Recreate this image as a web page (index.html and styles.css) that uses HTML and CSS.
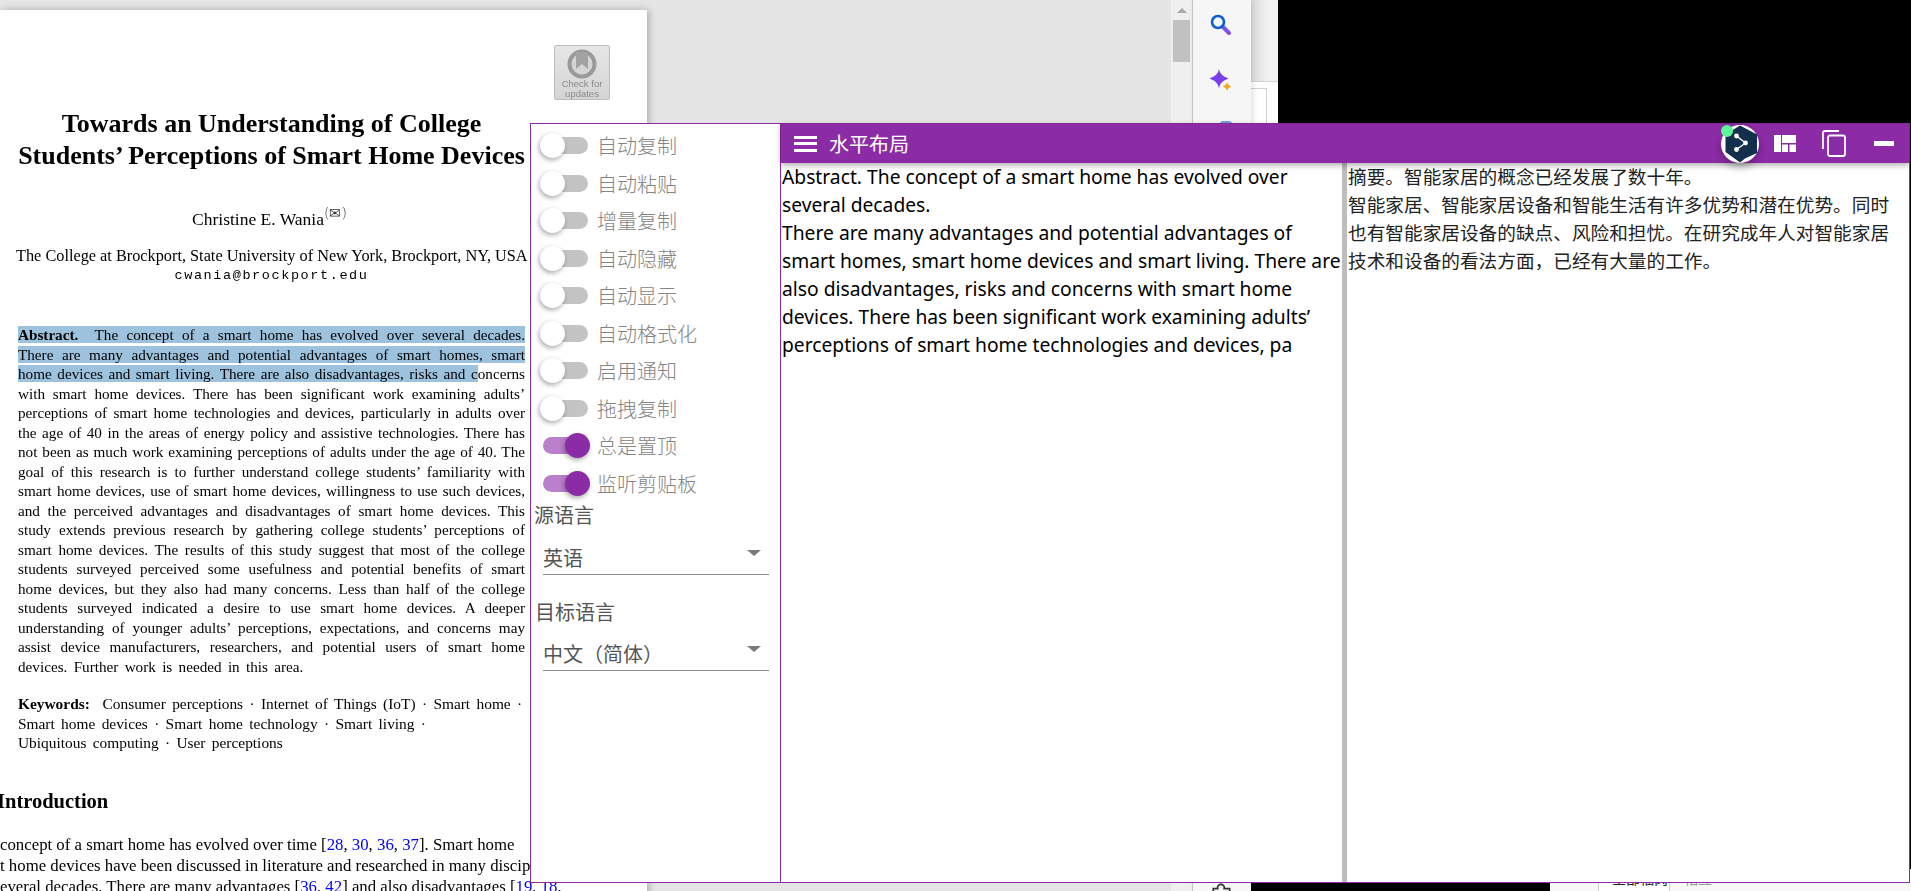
FILE: index.html
```html
<!DOCTYPE html>
<html lang="zh-CN">
<head>
    <meta charset="UTF-8">
    <meta name="viewport" content="width=device-width, initial-scale=1.0">
    <title>水平布局</title>
    <link rel="stylesheet" href="styles.css">
</head>
<body>
    <!-- pdf reader behind the translator window -->
    <div class="reader">
        <div class="reader-main">
            <div class="paper">
                <div class="badge">
                    <svg class="badge-icon" viewBox="0 0 30 30" width="30" height="30">
                        <circle cx="15" cy="15" r="12.5" fill="#d4d4d4" stroke="#999" stroke-width="4"/>
                        <path d="M9 3h12v17l-6-5-6 5z" fill="#a2a2a2"/>
                    </svg>
                    <div class="badge-text">Check for<br>updates</div>
                </div>
                <h1 class="paper-title">Towards an Understanding of College<br>Students’ Perceptions of Smart Home Devices</h1>
                <div class="author">Christine E. Wania<sup class="mail">(✉)</sup></div>
                <div class="affil">The College at Brockport, State University of New York, Brockport, NY, USA</div>
                <div class="email">cwania@brockport.edu</div>

                <div class="abstract">
                    <div class="ln"><span class="sel"><b>Abstract.</b>&nbsp; The concept of a smart home has evolved over several decades.</span></div>
                    <div class="ln"><span class="sel">There are many advantages and potential advantages of smart homes, smart</span></div>
                    <div class="ln"><span class="sel">home devices and smart living. There are also disadvantages, risks and c</span>oncerns</div>
                    <div class="ln">with smart home devices. There has been significant work examining adults’</div>
                    <div class="ln">perceptions of smart home technologies and devices, particularly in adults over</div>
                    <div class="ln">the age of 40 in the areas of energy policy and assistive technologies. There has</div>
                    <div class="ln">not been as much work examining perceptions of adults under the age of 40. The</div>
                    <div class="ln">goal of this research is to further understand college students’ familiarity with</div>
                    <div class="ln">smart home devices, use of smart home devices, willingness to use such devices,</div>
                    <div class="ln">and the perceived advantages and disadvantages of smart home devices. This</div>
                    <div class="ln">study extends previous research by gathering college students’ perceptions of</div>
                    <div class="ln">smart home devices. The results of this study suggest that most of the college</div>
                    <div class="ln">students surveyed perceived some usefulness and potential benefits of smart</div>
                    <div class="ln">home devices, but they also had many concerns. Less than half of the college</div>
                    <div class="ln">students surveyed indicated a desire to use smart home devices. A deeper</div>
                    <div class="ln">understanding of younger adults’ perceptions, expectations, and concerns may</div>
                    <div class="ln">assist device manufacturers, researchers, and potential users of smart home</div>
                    <div class="ln ln-end">devices. Further work is needed in this area.</div>
                </div>

                <div class="keywords">
                    <div><b>Keywords:</b>&nbsp; Consumer perceptions · Internet of Things (IoT) · Smart home ·</div>
                    <div>Smart home devices · Smart home technology · Smart living ·</div>
                    <div>Ubiquitous computing · User perceptions</div>
                </div>

                <h2 class="section">Introduction</h2>
                <div class="body-text">
                    <div>concept of a smart home has evolved over time [<a>28</a>, <a>30</a>, <a>36</a>, <a>37</a>]. Smart home</div>
                    <div>t home devices have been discussed in literature and researched in many disciplines</div>
                    <div>everal decades. There are many advantages [<a>36</a>, <a>42</a>] and also disadvantages [<a>19</a>, <a>18</a>,</div>
                </div>
            </div>
        </div>
        <div class="scrollbar">
            <div class="scroll-up"></div>
            <div class="scroll-thumb"></div>
        </div>
        <div class="toolbar">
            <svg class="tool-search" viewBox="0 0 22 22" width="22" height="22">
                <path d="M13 13l6 6" stroke="#7b52ee" stroke-width="4" stroke-linecap="round"/>
                <circle cx="8" cy="8" r="6" fill="none" stroke="#0b5fd3" stroke-width="2.6"/>
            </svg>
            <svg class="tool-spark" viewBox="0 0 24 24" width="24" height="24">
                <path d="M10 0c1 5 3.500 7 9.500 9.500C13.500 12 11 14 10 19.500 9 14 6.500 12 .5 9.500 6.500 7 9 5 10 0z" fill="#7a3df0"/>
                <path d="M18 13c.6 2.400 1.800 3.500 4.500 4.500-2.700 1-3.900 2.100-4.500 4.500-.6-2.400-1.800-3.500-4.500-4.500 2.700-1 3.900-2.100 4.500-4.500z" fill="#f5a81f"/>
            </svg>
            <div class="tool-blue"></div>
            <svg class="tool-puzzle" viewBox="0 0 22 22" width="24" height="24">
                <path d="M3 6h4c-1-5 7-5 6 0h5v5c4-1 4 7 0 6v4H3z" fill="none" stroke="#333" stroke-width="1.600"/>
            </svg>
        </div>
        <div class="side-panel">
            <div class="side-panel-box"></div>
        </div>
    </div>

    <!-- browser tabs peeking out under the window -->
    <div class="tabs">
        <div class="tab tab-on">全部福岗</div>
        <div class="tab">相互</div>
    </div>

    <!-- translator window -->
    <div class="window">
        <aside class="settings">
            <label class="row"><span class="toggle"><i></i></span>自动复制</label>
            <label class="row"><span class="toggle"><i></i></span>自动粘贴</label>
            <label class="row"><span class="toggle"><i></i></span>增量复制</label>
            <label class="row"><span class="toggle"><i></i></span>自动隐藏</label>
            <label class="row"><span class="toggle"><i></i></span>自动显示</label>
            <label class="row"><span class="toggle"><i></i></span>自动格式化</label>
            <label class="row"><span class="toggle"><i></i></span>启用通知</label>
            <label class="row"><span class="toggle"><i></i></span>拖拽复制</label>
            <label class="row"><span class="toggle toggle-on"><i></i></span>总是置顶</label>
            <label class="row"><span class="toggle toggle-on"><i></i></span>监听剪贴板</label>

            <div class="lang-label">源语言</div>
            <div class="lang-select"><span>英语</span><i class="arrow"></i></div>
            <div class="lang-label lang-label-target">目标语言</div>
            <div class="lang-select lang-select-target"><span>中文（简体）</span><i class="arrow"></i></div>
        </aside>

        <main class="content">
            <header class="appbar">
                <div class="menu-btn"><span></span><span></span><span></span></div>
                <div class="appbar-title">水平布局</div>
                <div class="logo">
                    <svg viewBox="0 0 38 38" width="38" height="38">
                        <circle cx="19" cy="19" r="19" fill="#fff"/>
                        <path d="M19 0.500L36 9.500V28L24 33.500L19 37.500L4.500 27V9.500z" fill="#12304c"/>
                        <path d="M15.500 11L24.500 18L15.500 24.500" fill="none" stroke="#fff" stroke-width="1.400"/>
                        <circle cx="15.500" cy="11" r="2.400" fill="#fff"/>
                        <circle cx="24.500" cy="18" r="2.400" fill="#fff"/>
                        <circle cx="15.500" cy="24.500" r="2.400" fill="#fff"/>
                    </svg>
                    <span class="logo-dot"></span>
                </div>
                <svg class="icon-layout" viewBox="0 0 22 17" width="22" height="17">
                    <path d="M0 0h7v17H0zM8 0h14v8H8zM8 9.500h6V17H8zM15.500 9.500H22V17h-6.500z" fill="#fff"/>
                </svg>
                <svg class="icon-copy" viewBox="0 0 24 27" width="24" height="27">
                    <path d="M17 1H3Q1 1 1 3v16" fill="none" stroke="#fff" stroke-width="1.800"/>
                    <rect x="6" y="5.500" width="17" height="20.500" rx="2" fill="none" stroke="#fff" stroke-width="1.800"/>
                </svg>
                <div class="icon-min"></div>
            </header>
            <div class="panes">
                <div class="pane">Abstract. The concept of a smart home has evolved over several decades.<br>There are many advantages and potential advantages of smart homes, smart home devices and smart living. There are also disadvantages, risks and concerns with smart home devices. There has been significant work examining adults’ perceptions of smart home technologies and devices, pa</div>
                <div class="splitter"></div>
                <div class="pane pane-zh">摘要。智能家居的概念已经发展了数十年。<br>智能家居、智能家居设备和智能生活有许多优势和潜在优势。同时也有智能家居设备的缺点、风险和担忧。在研究成年人对智能家居技术和设备的看法方面，已经有大量的工作。</div>
            </div>
        </main>
    </div>
</body>
</html>
```

FILE: styles.css
```css
* {
    box-sizing: border-box;
}
body {
    margin: 0;
    height: 891px;
    overflow: hidden;
    background-color: #000;
    position: relative;
    font-family: "Noto Sans", "Noto Sans CJK SC", sans-serif;
}

/* reader */
.reader {
    position: absolute;
    left: 0;
    top: 0;
    width: 1278px;
    height: 891px;
    display: flex;
    align-items: flex-start;
    overflow: hidden;
}
.reader-main {
    width: 1171px;
    height: 891px;
    background-color: #e5e5e5;
    padding-top: 10px;
    overflow: hidden;
}
.paper {
    width: 647px;
    height: 900px;
    padding-left: 18px;
    background-color: #fff;
    box-shadow: 2px 0 7px rgba(0, 0, 0, 0.25);
    font-family: "Liberation Serif", serif;
    color: #000;
    overflow: hidden;
    filter: blur(0.3px);
}
.badge {
    width: 56px;
    height: 55px;
    margin: 35px 0 0 536px;
    padding-top: 3px;
    border: 1px solid #bcbcbc;
    border-radius: 2px;
    background: linear-gradient(#e6e6e6, #d4d4d4);
    text-align: center;
}
.badge-icon {
    display: block;
    margin: 0 auto;
}
.badge-text {
    font-family: "Liberation Sans", sans-serif;
    font-size: 9.500px;
    line-height: 10px;
    color: #8a8a8a;
}
.paper-title {
    width: 507px;
    margin: 8px 0 0;
    font-size: 26px;
    line-height: 32px;
    text-align: center;
    white-space: nowrap;
}
.author {
    width: 507px;
    margin-top: 37px;
    padding-right: 4px;
    font-size: 17.500px;
    line-height: 20px;
    text-align: center;
}
.mail {
    font-size: 14px;
    line-height: 0;
    font-family: "DejaVu Sans", sans-serif;
    font-weight: 200;
    color: #333;
}
.affil {
    margin: 17px 0 0 -2px;
    width: 511px;
    font-size: 16.300px;
    line-height: 20px;
    text-align: center;
    white-space: nowrap;
}
.email {
    width: 507px;
    font-family: "Liberation Mono", monospace;
    font-size: 13.500px;
    letter-spacing: 1.600px;
    line-height: 20px;
    text-align: center;
}
.abstract {
    width: 507px;
    margin-top: 39px;
    font-size: 15.200px;
    line-height: 19.500px;
    word-spacing: -1.500px;
}
.ln {
    text-align: justify;
    text-align-last: justify;
}
.ln-end {
    text-align-last: left;
    word-spacing: 2.500px;
}
.sel {
    background-color: #9cc2de;
}
.keywords {
    margin-top: 18px;
    font-size: 15.400px;
    line-height: 19.500px;
    white-space: nowrap;
    word-spacing: 2.500px;
}
.section {
    margin: 36px 0 0 -21px;
    font-size: 20.500px;
    line-height: 24px;
}
.body-text {
    margin: 21px 0 0 -18px;
    font-size: 16.800px;
    line-height: 21px;
    white-space: nowrap;
}
.body-text a {
    color: #0000ff;
}

.scrollbar {
    width: 22px;
    height: 891px;
    padding: 8px 2px 0;
    background-color: #efefef;
    border-right: 1px solid #c8c8c8;
}
.scroll-up {
    width: 0;
    margin: 0 auto;
    border-left: 5px solid transparent;
    border-right: 5px solid transparent;
    border-bottom: 5px solid #a8a8a8;
}
.scroll-thumb {
    width: 17px;
    height: 42px;
    margin-top: 7px;
    background-color: #c1c1c1;
}
.toolbar {
    width: 58px;
    height: 891px;
    padding-top: 14px;
    display: flex;
    flex-direction: column;
    align-items: center;
    background-color: #f6f6f6;
    box-shadow: 2px 0 6px rgba(0, 0, 0, 0.12);
    position: relative;
}
.tool-search {
    margin-left: -2px;
}
.tool-spark {
    margin: 33px 0 0 -2px;
}
.tool-blue {
    width: 12px;
    height: 3px;
    margin: 28px 0 0 8px;
    border-radius: 4px 4px 0 0;
    background-color: #6f9fdc;
}
.tool-puzzle {
    margin: auto 0 -15px 0;
}
.side-panel {
    width: 27px;
    height: 130px;
    background: linear-gradient(90deg, #dcdcdc, #f3f3f3 70%);
}
.side-panel-box {
    height: 49px;
    margin-top: 81px;
    padding-top: 6px;
    background-color: #fff;
    border-top: 1px solid #d2d2d2;
}
.side-panel-box::after {
    content: "";
    display: block;
    width: 15px;
    height: 43px;
    border-top: 1px solid #d2d2d2;
    border-right: 1px solid #d2d2d2;
}

/* bottom tabs */
.tabs {
    position: absolute;
    left: 1550px;
    top: 869px;
    right: 0;
    bottom: 0;
    padding-left: 48px;
    display: flex;
    background-color: #f8f8f8;
    font-size: 14px;
    line-height: 19px;
    color: #9a9a9a;
}
.tab {
    padding: 0 14px;
    border-left: 1px solid #cfcfcf;
}
.tab-on {
    width: 72px;
    padding: 0 13px;
    background-color: #fff;
    color: #222;
    border-right: 1px solid #cfcfcf;
    white-space: nowrap;
}
.tab-on + .tab {
    border-left: none;
}

/* translator window */
.window {
    position: absolute;
    left: 530px;
    top: 123px;
    width: 1380px;
    height: 760px;
    display: flex;
    background-color: #fff;
    border: 1px solid #8c2ba6;
}
.settings {
    width: 250px;
    flex-shrink: 0;
    padding: 3px 0 0 9px;
    border-right: 1px solid #8c2ba6;
}
.row {
    height: 37.500px;
    display: flex;
    align-items: center;
    font-size: 20px;
    font-weight: 300;
    color: #848484;
}
.toggle {
    position: relative;
    width: 50px;
    height: 25px;
    margin-right: 7px;
    flex-shrink: 0;
}
.toggle::before {
    content: "";
    position: absolute;
    left: 3px;
    top: 4px;
    width: 45px;
    height: 17px;
    border-radius: 9px;
    background-color: #c4c4c4;
}
.toggle i {
    position: absolute;
    left: 0;
    top: 0;
    width: 25px;
    height: 25px;
    border-radius: 50%;
    background-color: #fff;
    box-shadow: -1px 2px 5px rgba(0, 0, 0, 0.35);
}
.toggle-on::before {
    background-color: #ba80cc;
}
.toggle-on i {
    left: 25px;
    background-color: #8c2ba6;
}
.lang-label {
    margin-left: -6px;
    padding-top: 1px;
    font-size: 20px;
    line-height: 26px;
    color: #555;
}
.lang-label-target {
    margin: 24px 0 0 -5px;
}
.lang-select {
    width: 226px;
    height: 46px;
    margin-left: 3px;
    padding-bottom: 2px;
    display: flex;
    align-items: flex-end;
    justify-content: space-between;
    border-bottom: 1px solid #8a8a8a;
    font-size: 20px;
    line-height: 26px;
    color: #555;
}
.lang-select-target {
    height: 45px;
}
.arrow {
    width: 0;
    margin: 0 8px 16px 0;
    border-left: 7px solid transparent;
    border-right: 7px solid transparent;
    border-top: 6px solid #7a7a7a;
}
.content {
    flex: 1;
    min-width: 0;
    display: flex;
    flex-direction: column;
}
.appbar {
    height: 39px;
    flex-shrink: 0;
    display: flex;
    align-items: center;
    padding-left: 13px;
    background-color: #8c2ba6;
    box-shadow: 0 2px 6px rgba(0, 0, 0, 0.35);
    color: #fff;
    position: relative;
    z-index: 1;
}
.menu-btn {
    width: 23px;
    height: 16px;
    display: flex;
    flex-direction: column;
    justify-content: space-between;
}
.menu-btn span {
    height: 3px;
    background-color: #fff;
}
.appbar-title {
    flex: 1;
    margin-left: 12px;
    font-size: 20px;
}
.logo {
    position: relative;
    width: 38px;
    height: 38px;
    margin-right: 15px;
    border-radius: 50%;
    box-shadow: 0 4px 8px rgba(0, 0, 0, 0.3);
}
.logo svg {
    display: block;
}
.logo-dot {
    position: absolute;
    left: 0;
    top: 0;
    width: 12px;
    height: 12px;
    border-radius: 50%;
    background-color: #5ef59a;
}
.icon-copy {
    margin: 0 28px 0 26px;
}
.icon-min {
    width: 20px;
    height: 5px;
    margin-right: 15px;
    background-color: #fff;
}
.panes {
    flex: 1;
    display: flex;
    min-height: 0;
}
.pane {
    flex: 1;
    min-width: 0;
    padding: 0 1px;
    font-size: 19.250px;
    line-height: 28px;
    color: #000;
}
.pane-zh {
    padding-right: 2px;
    font-size: 18.670px;
    color: #222;
}
.splitter {
    width: 5px;
    flex-shrink: 0;
    background-color: #bdbdbd;
}
```
